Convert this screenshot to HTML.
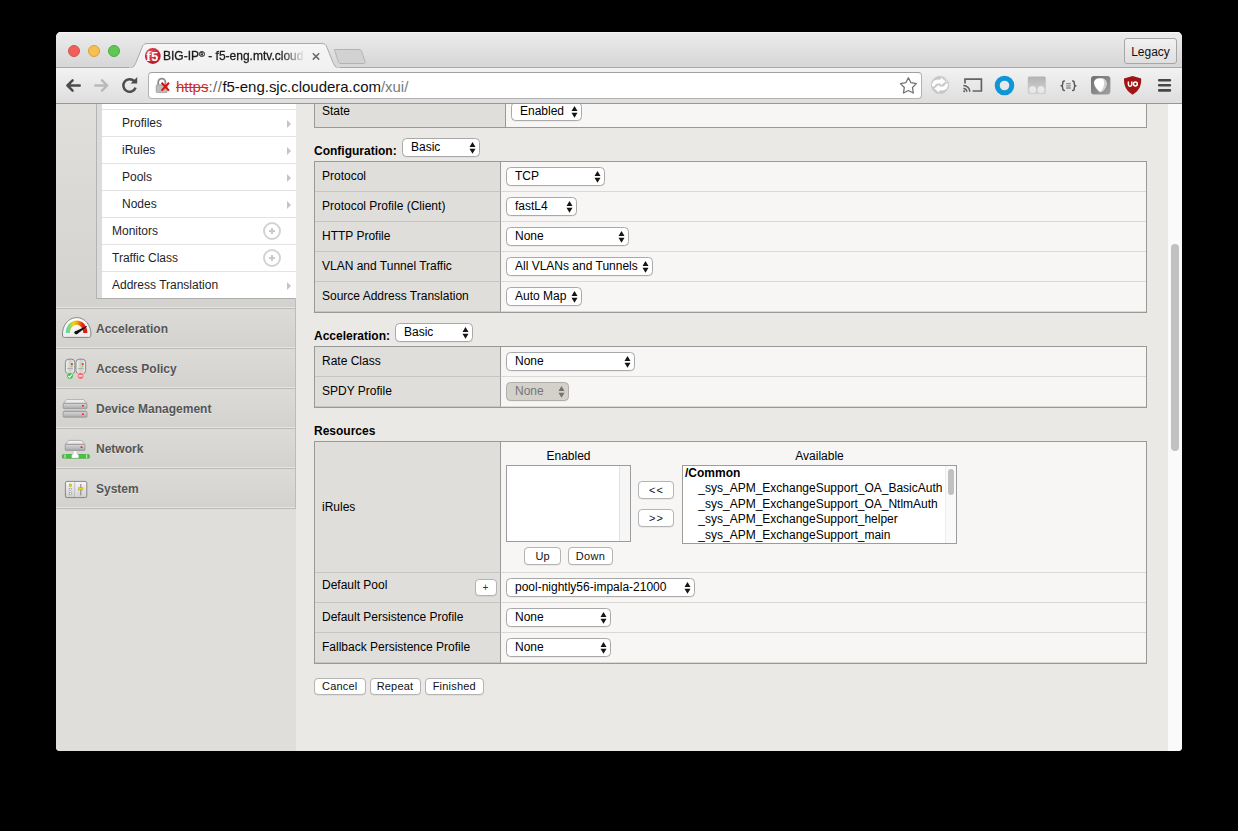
<!DOCTYPE html>
<html><head><meta charset="utf-8">
<style>
*{box-sizing:border-box;margin:0;padding:0}
html,body{width:1238px;height:831px;background:#000;overflow:hidden}
body{font-family:"Liberation Sans",sans-serif;font-size:12px;color:#000;position:relative}
.abs{position:absolute}
#win{position:absolute;left:56px;top:32px;width:1126px;height:719px;border-radius:5px 5px 4px 4px;overflow:hidden;background:#ebe9e5}
#title{position:absolute;left:0;top:0;width:1126px;height:36px;background:linear-gradient(#ececec,#d6d6d6);border-bottom:1px solid #a9a9a9;box-shadow:inset 0 1px 0 #f6f6f6}
#tool{position:absolute;left:0;top:36px;width:1126px;height:36px;background:linear-gradient(#f2f2f2,#dedede);border-bottom:1px solid #979797}
.tl{position:absolute;top:13px;width:12px;height:12px;border-radius:50%}
#side{position:absolute;left:0;top:72px;width:240px;height:647px;background:#dfdeda}
#main{position:absolute;left:240px;top:72px;width:871px;height:647px;background:#ebe9e5}
#sbar{position:absolute;left:1111px;top:72px;width:15px;height:647px;background:#fafafa;border-left:1px solid #e9e9e9}
#thumb{position:absolute;left:1115px;top:212px;width:8px;height:207px;border-radius:4px;background:#c1c1c1}

#tabsvg{position:absolute;left:0;top:0}
#tabtitle{position:absolute;left:107px;top:16px;-webkit-text-stroke:0.3px #1c1c1c;width:143px;height:16px;line-height:16px;font-size:12px;color:#1c1c1c;white-space:nowrap;overflow:hidden;-webkit-mask-image:linear-gradient(90deg,#000 118px,transparent 142px);mask-image:linear-gradient(90deg,#000 118px,transparent 142px)}
#legacy{position:absolute;left:1068px;top:6px;width:53px;height:26px;border:1px solid #a6a6a6;border-radius:3px;background:linear-gradient(#f1f1f1,#dfdfdf);font-size:12px;line-height:26px;text-align:center;color:#111}
#url{position:absolute;left:92px;top:4px;width:774px;height:27px;border:1px solid #b2b2b2;border-top-color:#a0a0a0;border-radius:4px;background:#fff}
#urltext{position:absolute;left:27px;top:3.5px;letter-spacing:-0.03px;font-size:15px;line-height:19px;white-space:nowrap;color:#111}

#sidetop{position:absolute;left:0;top:0;width:240px;height:204px;background:linear-gradient(#e0dfdb,#d3d2ce);border-bottom:1px solid #e6e5e1}
#menu{position:absolute;left:40px;top:0;width:200px;height:195px;background:#fff;border-left:1px solid #b4b4b4;border-bottom:1px solid #aeaeae}
#menu .strip{position:absolute;left:0;top:0;width:5px;height:194px;background:#dcdcdc}
.mi{position:absolute;left:5px;width:194px;height:27px;border-top:1px solid #e3e3e3;line-height:26px;font-size:12px;color:#1e1e28}
.mi .tri{position:absolute;left:185px;top:9.5px;width:0;height:0;border-left:4px solid #c4c4c4;border-top:4px solid transparent;border-bottom:4px solid transparent}
.mi .plus{position:absolute;left:161px;top:4px;width:18px;height:18px;border:2px solid #d3d3d3;border-radius:50%}
.mi .plus:before{content:"";position:absolute;left:4px;top:6px;width:6px;height:2px;background:#c9c9c9}
.mi .plus:after{content:"";position:absolute;left:6px;top:4px;width:2px;height:6px;background:#c9c9c9}
.acc{position:absolute;left:0;width:239px;height:40px;background:linear-gradient(#dcdbd7,#d3d2ce);border-top:1px solid #bcbbb8;border-bottom:1px solid #e6e5e1;font-weight:bold;font-size:12px;color:#555;line-height:40px;padding-left:40px;text-shadow:0 1px 0 rgba(255,255,255,.5)}
.acc svg{position:absolute;left:0;top:-2px}
#sideline{position:absolute;left:239px;top:194px;width:1px;height:211px;background:#bdbcb9}
#sideend{position:absolute;left:0;top:404px;width:240px;height:1px;background:#bcbbb8}

#main{overflow:hidden}
.tbl{position:absolute;left:18px;width:833px;border:1px solid #999;background:#f7f6f4}
.row{position:relative;height:30px;border-bottom:1px solid #dad9d6}
.row .l{position:absolute;left:0;top:0;bottom:-1px;width:186px;background:#dfdeda;border-right:1px solid #999;border-bottom:1px solid #c6c5c1;padding-left:7px;line-height:28px;white-space:nowrap}
.sel{position:absolute;height:19px;border:1px solid #a9a9a9;border-radius:4.5px;background:#fff;font-size:12px;line-height:17px;padding-left:8px;white-space:nowrap;box-shadow:0 0.5px 0 rgba(0,0,0,.08)}
.sel.dis{background:#d4d1ca;color:#767676;border-color:#b0aea8}
.sel svg{position:absolute;right:3.5px;top:2.8px}
.sel.dis svg{opacity:.5}
.h{position:absolute;left:18px;font-weight:bold;font-size:12px;line-height:14px;white-space:nowrap}
.btn{position:absolute;height:18px;border:1px solid #b4b4b4;border-radius:4px;background:#fff;font-size:11px;line-height:16px;text-align:center;white-space:nowrap;box-shadow:0 0.5px 0 rgba(0,0,0,.1);color:#111}
.lb{position:absolute;border:1px solid #9c9c9c;background:#fff;overflow:hidden}
.lbl{position:absolute;font-size:12px;line-height:14px;white-space:nowrap;text-align:center}
</style></head><body>
<div id="win">
<div id="title">
<div class="tl" style="left:12px;background:#ee6059;border:1px solid #d8524b"></div>
<div class="tl" style="left:32px;background:#f6bf4f;border:1px solid #d9a23c"></div>
<div class="tl" style="left:52px;background:#62c655;border:1px solid #4fab41"></div>
<svg id="tabsvg" width="400" height="37" viewBox="0 0 400 37">
 <defs><linearGradient id="tg" x1="0" y1="0" x2="0" y2="1"><stop offset="0" stop-color="#f6f6f6"/><stop offset="1" stop-color="#f1f1f1"/></linearGradient></defs>
 <path d="M72 36.5 C78 36.5 79 33 81 28 L86 15.5 C87.2 12.5 88.5 11.5 91 11.5 L266 11.5 C268.5 11.5 269.8 12.5 271 15.5 L276 28 C278 33 279 36.5 285 36.5 Z" fill="url(#tg)" stroke="#a9a9a9" stroke-width="1"/>
 <rect x="73" y="35.6" width="211" height="1.6" fill="#f1f1f1"/>
 <path d="M278.5 17.5 L303 17.5 C304.5 17.5 305 18 305.6 19.5 L309 29.5 C309.5 31 309 31.5 307.5 31.5 L285 31.5 C283.5 31.5 283 31 282.4 29.5 L279 19.5 C278.4 18 277.5 17.5 278.5 17.5 Z" fill="#d2d2d2" stroke="#b3b3b3" stroke-width="1"/>
 <defs><radialGradient id="f5g" cx="0.35" cy="0.3" r="0.8"><stop offset="0" stop-color="#e2555c"/><stop offset="0.6" stop-color="#cc2434"/><stop offset="1" stop-color="#b5182a"/></radialGradient></defs>
 <circle cx="96.8" cy="24" r="7.9" fill="url(#f5g)"/>
 <text x="90.2" y="29" font-family="Liberation Serif" font-weight="bold" font-size="14.5" fill="#fff">f</text>
 <text x="95.2" y="29.2" font-family="Liberation Sans" font-weight="bold" font-size="12.5" fill="#fff">5</text>
 <path d="M256.8 21.2 L263.2 27.6 M263.2 21.2 L256.8 27.6" stroke="#6a6a6a" stroke-width="1.5" fill="none"/>
</svg>
<div id="tabtitle">BIG-IP<span style="font-size:8px;vertical-align:3px;line-height:0">®</span> - f5-eng.mtv.cloud</div>
<div id="legacy">Legacy</div>
</div>
<div id="tool">
<svg class="abs" style="left:0;top:0" width="100" height="36" viewBox="0 0 100 36">
 <g fill="none" stroke-linecap="round" stroke-linejoin="round">
 <path d="M23.7 17.5 L11.6 17.5 M16.6 12.3 L11.4 17.5 L16.6 22.7" stroke="#4c4c4c" stroke-width="2.5"/>
 <path d="M39.3 17.5 L51 17.5 M46 12.3 L51.2 17.5 L46 22.7" stroke="#b9b9b9" stroke-width="2.4"/>
 <path d="M78.3 13.2 A6.3 6.3 0 1 0 79.6 19.6" stroke="#4c4c4c" stroke-width="2.5" stroke-linecap="butt"/>
 </g>
 <path d="M74.6 15.6 L81.2 15.6 L81.2 9 Z" fill="#4c4c4c"/>
</svg>
<div id="url">
 <svg class="abs" style="left:4px;top:3px" width="22" height="20" viewBox="0 0 22 20">
  <path d="M5.2 9 V6.2 A3.6 3.6 0 0 1 12.4 6.2 V9" fill="none" stroke="#8d8d8d" stroke-width="1.8"/>
  <rect x="3.2" y="8.8" width="11" height="7.8" rx="1" fill="#bcbcbc" stroke="#9c9c9c" stroke-width="0.8"/>
  <path d="M8.6 6.8 L16 14.6 M16 6.8 L8.6 14.6" stroke="#d4120e" stroke-width="2" fill="none"/>
 </svg>
 <div id="urltext"><span style="color:#c9302c;text-decoration:line-through">https</span><span style="color:#666;letter-spacing:.5px">://</span>f5-eng.sjc.cloudera.com<span style="color:#7a7a7a">/xui/</span></div>
 <svg class="abs" style="left:749px;top:2px" width="22" height="22" viewBox="0 0 22 22">
  <path d="M10.40 2.80 L12.93 7.72 L18.39 8.60 L14.49 12.53 L15.34 18.00 L10.40 15.50 L5.46 18.00 L6.31 12.53 L2.41 8.60 L7.87 7.72 Z" fill="#fff" stroke="#727272" stroke-width="1.3" stroke-linejoin="round"/>
 </svg>
</div>
<svg class="abs" style="left:866px;top:0" width="260" height="36" viewBox="0 0 260 36">
 <!-- sync -->
 <clipPath id="sc"><circle cx="18" cy="17" r="8"/></clipPath>
 <circle cx="18" cy="17" r="8.7" fill="#c6c6c6" stroke="#cdcdcd" stroke-width="0.9"/>
 <g clip-path="url(#sc)" fill="#fdfdfd">
  <path d="M9.4 18.6 C9.6 14 12.4 11.6 16 11.6 L18.8 11.6 L18.8 9.2 L23.8 13.5 L18.8 17.4 L18.8 15.4 L16.2 15.4 C14.4 15.4 13 16.4 12.6 18.6 Z"/>
  <path d="M26.6 15.4 C26.4 20 23.6 22.4 20 22.4 L17.2 22.4 L17.2 24.8 L12.2 20.5 L17.2 16.6 L17.2 18.6 L19.8 18.6 C21.6 18.6 23 17.6 23.4 15.4 Z"/>
  <path d="M21.6 9.6 C24.6 10.6 26.4 13 26.6 14.6 L24.6 14.2 L24.4 12.8 Z"/>
 </g>
 <!-- cast -->
 <path d="M43 15.4 V11.2 H59.4 V23 H50.6" fill="none" stroke="#636363" stroke-width="1.7"/>
 <path d="M41.4 17.4 A6.4 6.4 0 0 1 47.8 23.8 M41.4 20.4 A3.4 3.4 0 0 1 44.8 23.8" fill="none" stroke="#5c5c5c" stroke-width="1.5"/>
 <circle cx="42.2" cy="23.2" r="1" fill="#5c5c5c"/>
 <!-- blue ring -->
 <circle cx="82.5" cy="17.5" r="7.3" fill="none" stroke="#1095d5" stroke-width="5"/>
 <!-- gray square -->
 <defs><linearGradient id="gs" x1="0" y1="0" x2="0" y2="1"><stop offset="0" stop-color="#b3b3b3"/><stop offset="0.5" stop-color="#c4c4c4"/><stop offset="1" stop-color="#d2d2d2"/></linearGradient></defs>
 <rect x="105.8" y="8.6" width="18" height="17.6" rx="1.5" fill="url(#gs)"/>
 <circle cx="110.6" cy="21.4" r="3.5" fill="#e8e8e8"/><circle cx="119" cy="21.4" r="3.5" fill="#e8e8e8"/>
 <!-- braces -->
 <g fill="none" stroke="#5c5c5c" stroke-width="1.5" stroke-linecap="round" stroke-linejoin="round">
 <path d="M142.4 13 C140.6 13 140.8 14.2 140.8 15.4 C140.8 16.8 140.4 17.6 139.2 17.8 C140.4 18 140.8 18.8 140.8 20.2 C140.8 21.4 140.6 22.6 142.4 22.6"/>
 <path d="M150.6 13 C152.4 13 152.2 14.2 152.2 15.4 C152.2 16.8 152.6 17.6 153.8 17.8 C152.6 18 152.2 18.8 152.2 20.2 C152.2 21.4 152.4 22.6 150.6 22.6"/>
 </g>
 <path d="M144.2 15.6 H148.8 M144.2 17.8 H148.8 M144.2 20 H148.8" stroke="#8c8c8c" stroke-width="1.3"/>
 <!-- dark square -->
 <defs><linearGradient id="dg" x1="0" y1="0" x2="1" y2="1"><stop offset="0" stop-color="#6f6f6f"/><stop offset="1" stop-color="#a2a2a2"/></linearGradient></defs>
 <rect x="169" y="8" width="19.4" height="18.6" rx="3" fill="url(#dg)"/>
 <path d="M172 14.6 C172 10.6 177 9.4 181 10.6 C185.4 12 185.4 17 183 20.6 C181.4 23 179.4 24.6 178 24 C176 23 172 18.6 172 14.6 Z" fill="#fff"/>
 <path d="M181 10.6 C185.4 12 185.4 17 183 20.6 C181.4 23 179.4 24.6 178 24 C182 20.6 183.4 15 181 10.6 Z" fill="#d0d0d0"/>
 <!-- ublock -->
 <path d="M210.6 8 L219.2 10.6 C219.4 17.6 217.4 22.6 210.6 26.8 C203.8 22.6 201.8 17.6 202 10.6 Z" fill="#a11414"/>
 <g fill="none" stroke="#fff" stroke-width="1.5"><path d="M206.4 13.6 V16.6 A1.7 1.7 0 0 0 209.8 16.6 V13.6"/><circle cx="213.4" cy="16" r="1.9"/></g>
 <!-- menu -->
 <path d="M237.2 12.2 H247.9 M237.2 17.3 H247.9 M237.2 22.4 H247.9" stroke="#474747" stroke-width="2.6" stroke-linecap="round"/>
</svg>
</div>
<div id="side">
<div id="sidetop"></div>
<div id="menu"><div class="strip"></div>
<div class="mi" style="top:5px;padding-left:20px">Profiles<span class="tri"></span></div>
<div class="mi" style="top:32px;padding-left:20px">iRules<span class="tri"></span></div>
<div class="mi" style="top:59px;padding-left:20px">Pools<span class="tri"></span></div>
<div class="mi" style="top:86px;padding-left:20px">Nodes<span class="tri"></span></div>
<div class="mi" style="top:113px;padding-left:10px">Monitors<span class="plus"></span></div>
<div class="mi" style="top:140px;padding-left:10px">Traffic Class<span class="plus"></span></div>
<div class="mi" style="top:167px;padding-left:10px">Address Translation<span class="tri"></span></div>
</div>
<div class="acc" style="top:204px"><svg width="40" height="40" viewBox="0 0 40 40">
<defs><linearGradient id="ga" x1="0" y1="0" x2="1" y2="0"><stop offset="0" stop-color="#58d0dc"/><stop offset="0.16" stop-color="#86d66a"/><stop offset="0.36" stop-color="#f0d418"/><stop offset="0.56" stop-color="#f39a14"/><stop offset="0.78" stop-color="#e6220f"/><stop offset="1" stop-color="#dc1410"/></linearGradient>
<linearGradient id="gd" x1="0" y1="0" x2="0" y2="1"><stop offset="0" stop-color="#ffffff"/><stop offset="1" stop-color="#ececec"/></linearGradient></defs>
<path d="M6.5 28 C6 18.6 12.4 10.6 20.7 10.6 C29 10.6 35.4 18.6 34.9 28 C34.8 29.8 34.2 30.4 32.8 30.4 L8.6 30.4 C7.2 30.4 6.6 29.8 6.5 28 Z" fill="url(#gd)" stroke="#858585" stroke-width="1"/>
<path d="M9.8 26 C9.8 19 14.6 13.6 20.6 13.6 C26.6 13.6 31.4 19 31.4 26 L27.2 26 C27.2 21.4 24.3 17.8 20.6 17.8 C16.9 17.8 14 21.4 14 26 Z" fill="url(#ga)"/>
<path d="M19 24.4 L30.6 19 L30.9 19.7 L21.2 27 C19.8 28 18 26 19 24.4 Z" fill="#111"/>
<circle cx="20.1" cy="25.6" r="1.7" fill="#111"/>
</svg>Acceleration</div>
<div class="acc" style="top:244px"><svg width="40" height="40" viewBox="0 0 40 40">
<defs><linearGradient id="sv" x1="0" y1="0" x2="1" y2="0"><stop offset="0" stop-color="#f6f6f6"/><stop offset="0.5" stop-color="#cdcdcd"/><stop offset="1" stop-color="#efefef"/></linearGradient></defs>
<rect x="9.4" y="12.2" width="9.4" height="14.6" rx="3.2" fill="url(#sv)" stroke="#7f7f7f" stroke-width="0.9"/>
<rect x="20" y="12.2" width="9.6" height="14.6" rx="3.2" fill="url(#sv)" stroke="#7f7f7f" stroke-width="0.9"/>
<rect x="15" y="16.2" width="1.8" height="1.7" fill="#ee2030"/><rect x="15" y="18.5" width="1.8" height="1.7" fill="#7be04a"/>
<rect x="25.8" y="16.2" width="1.8" height="1.7" fill="#ee2030"/><rect x="25.8" y="18.5" width="1.8" height="1.7" fill="#7be04a"/>
<path d="M11.2 21.6 H17 M21.8 21.6 H27.8" stroke="#a4a4a4" stroke-width="0.8"/>
<circle cx="14" cy="28.9" r="3.5" fill="#57b85a" stroke="#dff0df" stroke-width="0.7"/>
<path d="M12.3 29 L13.6 30.3 L15.8 27.6" fill="none" stroke="#fff" stroke-width="1.1"/>
<circle cx="24.6" cy="28.9" r="3.5" fill="#ef6e72" stroke="#fbe6e6" stroke-width="0.7"/>
<path d="M22.8 28.9 H26.4" stroke="#fff" stroke-width="1.3"/>
</svg>Access Policy</div>
<div class="acc" style="top:284px"><svg style="top:-0.5px" width="40" height="40" viewBox="0 0 40 40">
<defs><linearGradient id="sf" x1="0" y1="0" x2="0" y2="1"><stop offset="0" stop-color="#d9d9d9"/><stop offset="1" stop-color="#a9a9a9"/></linearGradient>
<linearGradient id="st" x1="0" y1="0" x2="0" y2="1"><stop offset="0" stop-color="#fafafa"/><stop offset="1" stop-color="#dcdcdc"/></linearGradient></defs>
<g id="srv"><path d="M7.4 14.4 L10.6 10.6 L27.6 10.6 L30.8 14.4 Z" fill="url(#st)" stroke="#9a9a9a" stroke-width="0.7"/>
<rect x="7.2" y="14.4" width="23.8" height="5.2" rx="0.8" fill="url(#sf)" stroke="#8e8e8e" stroke-width="0.7"/>
<rect x="26" y="16" width="1.8" height="1.6" fill="#f0203a"/></g>
<g transform="translate(0,11.2)"><path d="M7.4 11.4 L8.6 10.6 L29.6 10.6 L30.8 11.4 Z" fill="url(#st)" stroke="#9a9a9a" stroke-width="0.7"/>
<rect x="7.2" y="11.4" width="23.8" height="5.6" rx="0.8" fill="url(#sf)" stroke="#8e8e8e" stroke-width="0.7"/>
<rect x="26" y="13.2" width="1.8" height="1.6" fill="#f0203a"/></g>
</svg>Device Management</div>
<div class="acc" style="top:324px"><svg style="top:-0.6px" width="40" height="40" viewBox="0 0 40 40">
<path d="M9.4 16.4 L12.6 12.4 L25.6 12.4 L28.8 16.4 Z" fill="url(#st)" stroke="#9a9a9a" stroke-width="0.7"/>
<rect x="9.2" y="16.4" width="19.8" height="6" rx="0.8" fill="url(#sf)" stroke="#8e8e8e" stroke-width="0.7"/>
<rect x="24.6" y="18.4" width="1.8" height="1.6" fill="#f0203a"/>
<rect x="6.4" y="26.6" width="27" height="3.6" rx="1" fill="#46c83c" stroke="#2f9a28" stroke-width="0.6"/>
<rect x="8.4" y="26.4" width="1.2" height="4" fill="#b8eab2"/><rect x="30" y="26.4" width="1.2" height="4" fill="#b8eab2"/>
<path d="M17.6 23 H20.8 V25.6 L22.6 27 V30 H15.8 V27 L17.6 25.6 Z" fill="#fff" stroke="#bbb" stroke-width="0.4"/>
</svg>Network</div>
<div class="acc" style="top:364px"><svg style="top:-1px" width="40" height="40" viewBox="0 0 40 40">
<defs><linearGradient id="sy" x1="0" y1="0" x2="0" y2="1"><stop offset="0" stop-color="#f6f6f6"/><stop offset="1" stop-color="#cfcfcf"/></linearGradient></defs>
<rect x="9.4" y="13.4" width="21.4" height="16.2" rx="1.6" fill="url(#sy)" stroke="#7e7e7e" stroke-width="0.9"/>
<path d="M19 14 V29" stroke="#9a9a9a" stroke-width="0.8"/><path d="M19.8 14 V29" stroke="#fff" stroke-width="0.6"/>
<rect x="13.2" y="16" width="2.4" height="2.4" fill="#f2d21c" stroke="#a89010" stroke-width="0.4"/>
<rect x="13.2" y="20.2" width="2.4" height="2.4" fill="#fff" stroke="#888" stroke-width="0.5"/>
<rect x="13.2" y="24.4" width="2.4" height="2.4" fill="#fff" stroke="#888" stroke-width="0.5"/>
<path d="M24.8 16 V27.4" stroke="#777" stroke-width="0.9"/>
<rect x="22.6" y="19.8" width="4.4" height="2.2" fill="#f2d21c" stroke="#a89010" stroke-width="0.4"/>
</svg>System</div>
<div id="sideline"></div><div id="sideend"></div>
</div>
<div id="main">
<div class="tbl" style="top:-8px"><div class="row" style="border-bottom:0"><div class="l" style="width:191px;border-bottom:0;bottom:0">State</div></div></div>
<div class="sel " style="left:215px;top:-2px;width:71px">Enabled<svg width="7" height="12" viewBox="0 0 7 12"><path d="M3.5 0 L6.5 5.1 H0.5 Z M3.5 11.7 L6.5 6.7 H0.5 Z" fill="#151515"/></svg></div>
<div class="h" style="top:40px">Configuration:</div>
<div class="sel " style="left:106px;top:34px;width:78px">Basic<svg width="7" height="12" viewBox="0 0 7 12"><path d="M3.5 0 L6.5 5.1 H0.5 Z M3.5 11.7 L6.5 6.7 H0.5 Z" fill="#151515"/></svg></div>
<div class="tbl" style="top:57px"><div class="row"><div class="l">Protocol</div></div><div class="row"><div class="l">Protocol Profile (Client)</div></div><div class="row"><div class="l">HTTP Profile</div></div><div class="row"><div class="l">VLAN and Tunnel Traffic</div></div><div class="row"><div class="l">Source Address Translation</div></div></div>
<div class="sel " style="left:210px;top:63px;width:99px">TCP<svg width="7" height="12" viewBox="0 0 7 12"><path d="M3.5 0 L6.5 5.1 H0.5 Z M3.5 11.7 L6.5 6.7 H0.5 Z" fill="#151515"/></svg></div>
<div class="sel " style="left:210px;top:93px;width:71px">fastL4<svg width="7" height="12" viewBox="0 0 7 12"><path d="M3.5 0 L6.5 5.1 H0.5 Z M3.5 11.7 L6.5 6.7 H0.5 Z" fill="#151515"/></svg></div>
<div class="sel " style="left:210px;top:123px;width:123px">None<svg width="7" height="12" viewBox="0 0 7 12"><path d="M3.5 0 L6.5 5.1 H0.5 Z M3.5 11.7 L6.5 6.7 H0.5 Z" fill="#151515"/></svg></div>
<div class="sel " style="left:210px;top:153px;width:147px">All VLANs and Tunnels<svg width="7" height="12" viewBox="0 0 7 12"><path d="M3.5 0 L6.5 5.1 H0.5 Z M3.5 11.7 L6.5 6.7 H0.5 Z" fill="#151515"/></svg></div>
<div class="sel " style="left:210px;top:183px;width:76px">Auto Map<svg width="7" height="12" viewBox="0 0 7 12"><path d="M3.5 0 L6.5 5.1 H0.5 Z M3.5 11.7 L6.5 6.7 H0.5 Z" fill="#151515"/></svg></div>
<div class="h" style="top:225px">Acceleration:</div>
<div class="sel " style="left:99px;top:219px;width:78px">Basic<svg width="7" height="12" viewBox="0 0 7 12"><path d="M3.5 0 L6.5 5.1 H0.5 Z M3.5 11.7 L6.5 6.7 H0.5 Z" fill="#151515"/></svg></div>
<div class="tbl" style="top:242px"><div class="row"><div class="l">Rate Class</div></div><div class="row"><div class="l">SPDY Profile</div></div></div>
<div class="sel " style="left:210px;top:248px;width:129px">None<svg width="7" height="12" viewBox="0 0 7 12"><path d="M3.5 0 L6.5 5.1 H0.5 Z M3.5 11.7 L6.5 6.7 H0.5 Z" fill="#151515"/></svg></div>
<div class="sel dis" style="left:210px;top:278px;width:63px">None<svg width="7" height="12" viewBox="0 0 7 12"><path d="M3.5 0 L6.5 5.1 H0.5 Z M3.5 11.7 L6.5 6.7 H0.5 Z" fill="#151515"/></svg></div>
<div class="h" style="top:320px">Resources</div>
<div class="tbl" style="top:337px"><div class="row" style="height:131px"><div class="l" style="line-height:130px">iRules</div></div><div class="row"><div class="l" style="line-height:24px">Default Pool</div></div><div class="row"><div class="l">Default Persistence Profile</div></div><div class="row"><div class="l">Fallback Persistence Profile</div></div></div>
<div class="lbl" style="left:210px;top:345px;width:125px">Enabled</div>
<div class="lbl" style="left:386px;top:345px;width:275px">Available</div>
<div class="lb" style="left:210px;top:361px;width:125px;height:77px"><div style="position:absolute;right:0;top:0;width:11px;height:100%;background:#f6f6f6;border-left:1px solid #e2e2e2"></div></div>
<div class="lb" style="left:386px;top:361px;width:275px;height:79px"><div style="position:absolute;left:2px;top:0px;font-weight:bold;line-height:15px;font-size:12px">/Common</div><div style="position:absolute;left:15.3px;top:15px;line-height:15px;font-size:12px;white-space:nowrap">_sys_APM_ExchangeSupport_OA_BasicAuth</div><div style="position:absolute;left:15.3px;top:31px;line-height:15px;font-size:12px;white-space:nowrap">_sys_APM_ExchangeSupport_OA_NtlmAuth</div><div style="position:absolute;left:15.3px;top:46px;line-height:15px;font-size:12px;white-space:nowrap">_sys_APM_ExchangeSupport_helper</div><div style="position:absolute;left:15.3px;top:62px;line-height:15px;font-size:12px;white-space:nowrap">_sys_APM_ExchangeSupport_main</div><div style="position:absolute;right:0;top:0;width:11px;height:100%;background:#fafafa;border-left:1px solid #ececec"></div><div style="position:absolute;right:2.5px;top:2.5px;width:6px;height:26px;border-radius:3px;background:#c1c1c1"></div></div>
<div class="btn" style="left:342px;top:377px;width:36px;height:18px;line-height:16px;letter-spacing:1.2px;text-indent:1px">&lt;&lt;</div>
<div class="btn" style="left:342px;top:405px;width:36px;height:18px;line-height:16px;letter-spacing:1.2px;text-indent:1px">&gt;&gt;</div>
<div class="btn" style="left:228px;top:443px;width:37px;height:18px;line-height:16px">Up</div>
<div class="btn" style="left:272px;top:443px;width:45px;height:18px;line-height:16px;letter-spacing:.3px">Down</div>
<div class="btn" style="left:178.5px;top:474.5px;width:22px;height:17px;line-height:16.5px;font-size:10px;color:#333">+</div>
<div class="sel " style="left:210px;top:474px;width:189px">pool-nightly56-impala-21000<svg width="7" height="12" viewBox="0 0 7 12"><path d="M3.5 0 L6.5 5.1 H0.5 Z M3.5 11.7 L6.5 6.7 H0.5 Z" fill="#151515"/></svg></div>
<div class="sel " style="left:210px;top:504px;width:105px">None<svg width="7" height="12" viewBox="0 0 7 12"><path d="M3.5 0 L6.5 5.1 H0.5 Z M3.5 11.7 L6.5 6.7 H0.5 Z" fill="#151515"/></svg></div>
<div class="sel " style="left:210px;top:534px;width:105px">None<svg width="7" height="12" viewBox="0 0 7 12"><path d="M3.5 0 L6.5 5.1 H0.5 Z M3.5 11.7 L6.5 6.7 H0.5 Z" fill="#151515"/></svg></div>
<div class="btn" style="left:18px;top:573.5px;width:51.5px;height:17.5px;line-height:15px;letter-spacing:.2px">Cancel</div>
<div class="btn" style="left:73.5px;top:573.5px;width:51px;height:17.5px;line-height:15px;letter-spacing:.2px">Repeat</div>
<div class="btn" style="left:129px;top:573.5px;width:58.5px;height:17.5px;line-height:15px;letter-spacing:.2px">Finished</div>
</div>
<div id="sbar"></div><div id="thumb"></div>
</div>
</body></html>
